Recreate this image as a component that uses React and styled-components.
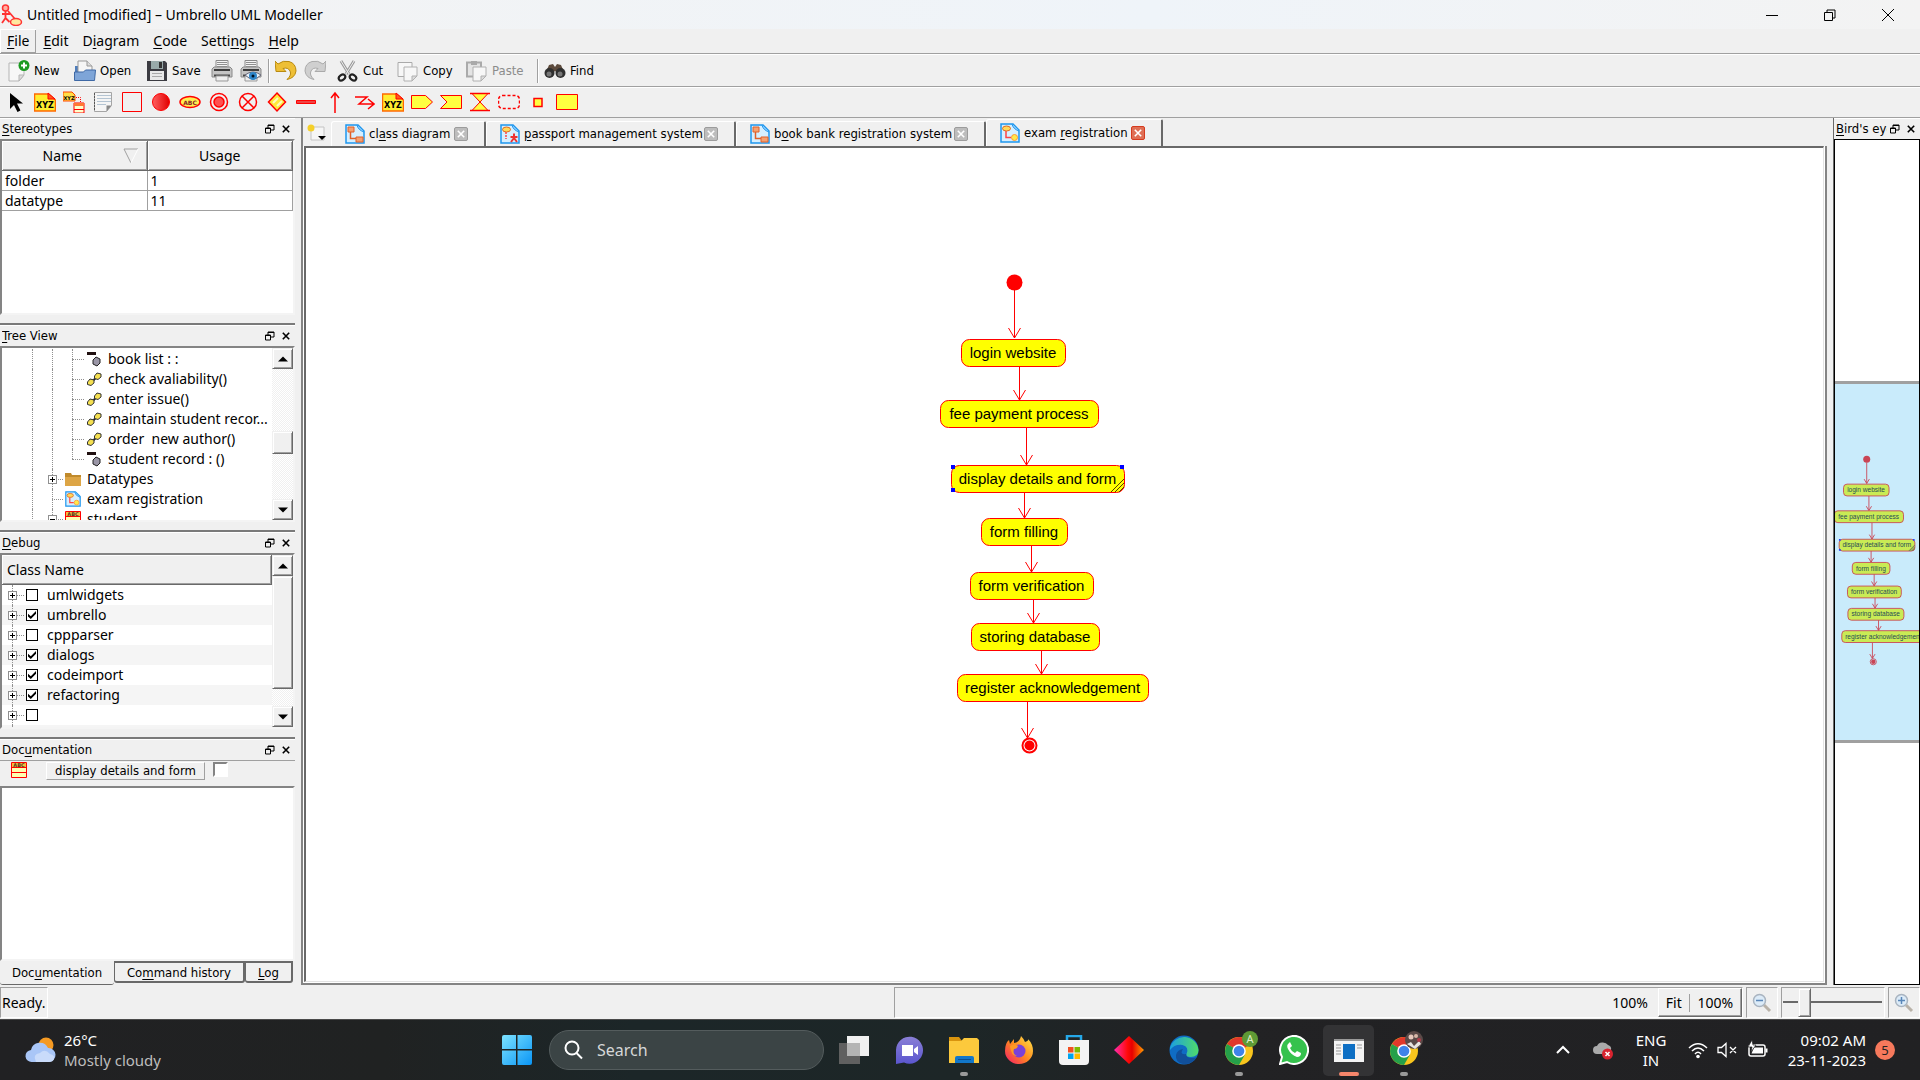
import React, { useState } from "react";
import styled, { createGlobalStyle, css } from "styled-components";

const ui = `"Noto Sans", "Open Sans", sans-serif`;
const tahoma = `"DejaVu Sans Condensed", "DejaVu Sans", sans-serif`;

const Global = createGlobalStyle`
  * { box-sizing: border-box; }
  html, body { margin: 0; overflow: hidden; }
  body { font-family: ${ui}; font-size: 14px; color: #000; background: #f0f0f0; }
  button, input, textarea { font: inherit; color: inherit; margin: 0; padding: 0; border-radius: 0; }
  button { background: none; border: 0; }
  svg { display: block; flex: none; }
  u { text-underline-offset: 2px; text-decoration-thickness: 1px; }
`;

const Shell = styled.div`
  display: flex;
  flex-direction: column;
  height: 100vh;
  background: #f0f0f0;
`;

/* ---------- title and menu ---------- */
const TitleBar = styled.header`
  display: flex;
  align-items: center;
  height: 29px;
  padding-left: 1px;
  background: linear-gradient(90deg, #f3f3f3, #eff4f9 60%, #f3f3f3);
`;
const TitleText = styled.h1`
  flex: 1;
  margin: 0 0 0 4px;
  font-size: 14px;
  font-weight: 400;
  line-height: 28px;
`;
const WinButton = styled.button`
  display: grid;
  place-items: center;
  width: 58px;
  height: 28px;
`;
const WinButtons = styled.div`
  display: flex;
  padding-right: 3px;
`;
const MenuBar = styled.nav`
  display: flex;
  height: 25px;
  border-bottom: 1px solid #a0a0a0;
`;
const MenuItem = styled.button`
  padding: 0 7px;
  line-height: 22px;
  height: 24px;
  ${(p) =>
    p.$raised &&
    css`
      box-shadow: inset 1px 1px #fff, inset -1px -1px #a0a0a0;
    `}
`;

/* ---------- toolbars ---------- */
const ToolBar = styled.div`
  display: flex;
  align-items: center;
  height: ${(p) => (p.$small ? 31 : 33)}px;
  padding: ${(p) => (p.$small ? "0 0 2px 1px" : "0 0 0 5px")};
  border-top: 1px solid #fff;
  border-bottom: 1px solid #a0a0a0;
`;
const ToolButton = styled.button`
  display: flex;
  align-items: center;
  gap: 4px;
  width: ${(p) => p.$w}px;
  height: 30px;
  padding-left: 3px;
  font-family: ${tahoma};
  font-size: 13px;
  line-height: 16px;
  color: ${(p) => (p.disabled ? "#8c8c8c" : "#000")};
  white-space: nowrap;
`;
const ToolSep = styled.span`
  width: 2px;
  height: 24px;
  margin: 0 2px;
  border-left: 1px solid #a0a0a0;
  border-right: 1px solid #fff;
`;
const ShapeButton = styled.button`
  display: grid;
  place-items: center;
  width: 29px;
  height: 28px;
`;

/* ---------- docks ---------- */
const Body = styled.main`
  display: flex;
  flex: 1;
  min-height: 0;
`;
const LeftDock = styled.aside`
  display: flex;
  flex-direction: column;
  width: 295px;
`;
const Dock = styled.section`
  display: flex;
  flex-direction: column;
  flex: ${(p) => p.$grow} 1 0;
  min-height: 0;
  padding-bottom: ${(p) => (p.$last ? 0 : 8)}px;
  border-bottom: ${(p) => (p.$last ? "0" : "2px solid #7a7a7a")};
`;
const DockTitle = styled.div`
  display: flex;
  align-items: center;
  flex: none;
  height: 21px;
  padding: 0 1px 0 2px;
  overflow: hidden;
  border-top: 1px solid #fff;
`;
const DockName = styled.h2`
  flex: 1;
  min-width: 0;
  margin: 0;
  overflow: hidden;
  white-space: nowrap;
  font-family: ${tahoma};
  font-size: 13px;
  font-weight: 400;
  line-height: 20px;
`;
const DockButton = styled.button`
  display: grid;
  place-items: center;
  width: 16px;
  height: 16px;
`;
const Sunken = styled.div`
  display: flex;
  flex: 1;
  min-height: 0;
  overflow: hidden;
  background: #fff;
  border: 2px solid;
  border-color: #848484 #f4f4f4 #f4f4f4 #848484;
`;
const DataTable = styled.table`
  align-self: flex-start;
  width: 100%;
  table-layout: fixed;
  border-collapse: separate;
  border-spacing: 0;
`;
const HeadCell = styled.th`
  height: 30px;
  padding: 0 8px;
  font-weight: 400;
  line-height: 26px;
  text-align: center;
  background: #f0f0f0;
  border-right: 1px solid #696969;
  border-bottom: 1px solid #696969;
  box-shadow: inset 1px 1px #fff, inset -1px -1px #a0a0a0;
`;
const HeadInner = styled.span`
  display: flex;
  align-items: center;
  gap: 8px;
`;
const HeadLabel = styled.span`
  flex: 1;
`;
const Cell = styled.td`
  height: 20px;
  padding: 0 3px;
  line-height: 18px;
  border-right: 1px solid #a0a0a0;
  border-bottom: 1px solid #a0a0a0;
`;

const Scroll = styled.div`
  display: flex;
  flex-direction: column;
  flex: none;
  width: 21px;
  background: repeating-conic-gradient(#f0f0f0 0% 25%, #fff 0% 50%) 0 0 / 2px 2px;
`;
const bevel = css`
  background: #f0f0f0;
  border: 1px solid;
  border-color: #f0f0f0 #696969 #696969 #f0f0f0;
  box-shadow: inset 1px 1px #fff, inset -1px -1px #a0a0a0;
`;
const ScrollArrow = styled.button`
  ${bevel}
  display: grid;
  place-items: center;
  height: 21px;
  flex: none;
`;
const ScrollSpace = styled.div`
  flex: ${(p) => p.$grow} 1 0;
`;
const ScrollThumb = styled.div`
  ${bevel}
  flex: ${(p) => p.$grow} 1 0;
`;

/* ---------- trees ---------- */
const List = styled.ul`
  flex: 1;
  min-width: 0;
  margin: 0;
  padding: ${(p) => p.$top || 0}px 0 0;
  list-style: none;
`;
const TreeRow = styled.li`
  display: flex;
  align-items: center;
  height: 20px;
  line-height: 20px;
  white-space: pre;
`;
const Guide = styled.span`
  position: relative;
  width: ${(p) => p.$w || 20}px;
  height: 20px;
  flex: none;
  &::before {
    content: "";
    position: absolute;
    left: ${(p) => p.$x}px;
    top: 0;
    height: ${(p) => (p.$end ? 10 : 20)}px;
    border-left: 1px dotted #909090;
  }
  &::after {
    content: "";
    position: absolute;
    left: ${(p) => p.$x}px;
    right: 2px;
    top: 10px;
    border-top: ${(p) => (p.$branch ? "1px dotted #909090" : "0")};
  }
`;
const Expander = styled.button`
  position: absolute;
  z-index: 1;
  left: ${(p) => p.$x - 4}px;
  top: 6px;
  display: grid;
  place-items: center;
  width: 9px;
  height: 9px;
  background: #fff;
  border: 1px solid #909090;
`;
const TreeLabel = styled.span`
  margin-left: ${(p) => p.$gap}px;
`;
const DebugRow = styled(TreeRow)`
  background: ${(p) => (p.$alt ? "#f5f5f5" : "#fff")};
`;
const DebugHead = styled.div`
  height: 31px;
  padding-left: 5px;
  line-height: 29px;
  background: #f0f0f0;
  border-right: 1px solid #696969;
  border-bottom: 1px solid #696969;
  box-shadow: inset 1px 1px #fff, inset -1px -1px #a0a0a0;
`;
const Column = styled.div`
  display: flex;
  flex-direction: column;
  flex: 1;
  min-width: 0;
  overflow: hidden;
`;
const Check = styled.input`
  appearance: none;
  display: grid;
  place-items: center;
  flex: none;
  width: 12px;
  height: 12px;
  background: #fff;
  border: 1px solid #000;
  &:checked::before {
    content: "";
    width: 8px;
    height: 8px;
    background: #000;
    clip-path: polygon(0 35%, 35% 65%, 100% 0, 100% 35%, 35% 100%, 0 70%);
  }
`;
const DebugLabel = styled.label`
  display: flex;
  align-items: center;
  gap: 9px;
`;
const DocHead = styled.div`
  display: flex;
  align-items: flex-start;
  height: 26px;
  border-top: 1px solid #a0a0a0;
  padding: 1px 0 0 11px;
`;
const DocName = styled.button`
  height: 18px;
  margin: 0 8px 0 19px;
  padding: 0 8px;
  font-family: ${tahoma};
  font-size: 13px;
  line-height: 16px;
  border: 1px solid;
  border-color: #fff #a0a0a0 #a0a0a0 #fff;
`;
const DocCheck = styled(Check)`
  width: 15px;
  height: 15px;
  border: 2px solid;
  border-color: #848484 #fff #fff #848484;
`;
const DocText = styled.textarea`
  flex: 1;
  resize: none;
  border: 0;
  outline: 0;
`;
const DockTabs = styled.div`
  display: flex;
  align-items: flex-start;
  height: 24px;
  flex: none;
`;
const DockTab = styled.button`
  height: ${(p) => (p.$active ? 24 : 22)}px;
  width: ${(p) => p.$w}px;
  font-family: ${tahoma};
  font-size: 13px;
  line-height: 20px;
  white-space: nowrap;
  border: solid #696969;
  border-width: ${(p) => (p.$active ? "0 0 1px 0" : "2px 2px 2px 1px")};
  border-radius: 0 0 3px 3px;
`;

/* ---------- centre ---------- */
const Centre = styled.section`
  display: flex;
  flex-direction: column;
  flex: 1;
  min-width: 0;
  margin: 0 6px;
  border: solid #848484;
  border-width: 0 0 2px 2px;
`;
const TabStrip = styled.div`
  display: flex;
  align-items: flex-end;
  height: 28px;
  flex: none;
`;
const NewTab = styled.button`
  width: 28px;
  height: 26px;
  display: grid;
  place-items: center;
`;
const DocTab = styled.div`
  display: flex;
  align-items: center;
  height: ${(p) => (p.$active ? 27 : 25)}px;
  width: ${(p) => p.$w}px;
  padding: 0 16px 0 13px;
  border: solid;
  border-width: 1px 2px 0 1px;
  border-color: #fff #696969 #fff #fff;
  border-radius: 3px 2px 0 0;
`;
const TabName = styled.button`
  display: flex;
  align-items: center;
  gap: 4px;
  flex: 1;
  min-width: 0;
  font-family: ${tahoma};
  font-size: 13px;
  line-height: 20px;
  white-space: nowrap;
`;
const TabClose = styled.button`
  display: grid;
  place-items: center;
  flex: none;
  width: 14px;
  height: 14px;
  border: 1px solid ${(p) => (p.$active ? "#d63a1e" : "#9c9c9c")};
  border-radius: 2px;
  background: ${(p) => (p.$active ? "#df6f55" : "#bdbdbd")};
`;
const CanvasFrame = styled.div`
  display: flex;
  flex: 1;
  min-height: 0;
  padding: 0 1px 1px;
  background: #fff;
  border-right: 2px solid #848484;
`;
const Canvas = styled.div`
  flex: 1;
  min-width: 0;
  overflow: hidden;
  background: #fff;
  border: solid;
  border-width: 2px 1px 1px 2px;
  border-color: #696969 #e3e3e3 #e3e3e3 #696969;
`;

/* ---------- bird's eye ---------- */
const RightDock = styled.aside`
  display: flex;
  flex-direction: column;
  width: 87px;
  border-left: 1px solid #696969;
`;
const Bird = styled.div`
  display: flex;
  flex-direction: column;
  flex: 1;
  min-height: 0;
  background: #fff;
  border: 1px solid #000;
`;
const BirdSpace = styled.div`
  flex: ${(p) => p.$grow} 1 0;
`;
const BirdView = styled.div`
  flex: none;
  overflow: hidden;
  border: solid #a0a0a0;
  border-width: 3px 0;
`;

/* ---------- status ---------- */
const StatusBar = styled.footer`
  display: flex;
  gap: 3px;
  height: 34px;
  padding: 2px 0 1px;
  line-height: 29px;
`;
const panel = css`
  border: 1px solid;
  border-color: #a0a0a0 #fff #fff #a0a0a0;
`;
const Ready = styled.div`
  ${panel}
  width: 48px;
  padding-left: 1px;
`;
const StatusGap = styled.div`
  flex: 841 1 0;
`;
const StatusPanel = styled.div`
  ${panel}
  flex: 848 1 0;
  display: flex;
  justify-content: flex-end;
  gap: 10px;
`;
const ZoomGroup = styled.div`
  display: flex;
  align-items: center;
  width: 84px;
  height: 29px;
  border: 1px solid;
  border-color: #fff #696969 #696969 #fff;
  box-shadow: inset -1px -1px #a0a0a0;
`;
const ZoomText = styled.button`
  flex: ${(p) => p.$grow};
  line-height: 26px;
  & + & {
    border-left: 1px solid #a0a0a0;
    line-height: 18px;
  }
`;
const ZoomIconBox = styled.button`
  ${panel}
  display: grid;
  place-items: center;
  width: 32px;
`;
const SliderBox = styled.div`
  ${panel}
  width: 104px;
  padding: 0 2px 0 1px;
`;
const Slider = styled.input`
  appearance: none;
  display: block;
  width: 100%;
  height: 29px;
  background: none;
  &::-webkit-slider-runnable-track {
    height: 29px;
    background: linear-gradient(#696969, #696969) 0 13px / 100% 2px no-repeat;
  }
  &::-webkit-slider-thumb {
    appearance: none;
    width: 13px;
    height: 29px;
    ${bevel}
  }
`;

/* ---------- taskbar ---------- */
const TaskBar = styled.footer`
  display: grid;
  grid-template-columns: 1fr auto 1fr;
  align-items: center;
  flex: none;
  height: 61px;
  color: #fff;
  font-size: 15px;
  border-top: 1px solid #4a4a4a;
  background: linear-gradient(90deg, #212123, #202222 20%, #1c2628 33%, #1d2627 50%, #222224 62%, #212123);
`;
const Weather = styled.button`
  display: flex;
  align-items: center;
  gap: 8px;
  padding-left: 24px;
  text-align: left;
  line-height: 20px;
`;
const Muted = styled.span`
  display: block;
  color: #bdbdbd;
`;
const Apps = styled.div`
  display: flex;
  align-items: center;
`;
const AppButton = styled.button`
  position: relative;
  display: grid;
  place-items: center;
  width: 51px;
  height: 51px;
  margin: 0 2px;
  border-radius: 5px;
  background: ${(p) => (p.$active ? "#333335" : "none")};
  &::after {
    content: "";
    position: absolute;
    bottom: 0;
    left: 50%;
    transform: translateX(-50%);
    width: ${(p) => (p.$active ? 20 : p.$open ? 8 : 0)}px;
    height: 4px;
    border-radius: 2px;
    background: ${(p) => (p.$active ? "#f6866b" : "#9a9a9a")};
  }
`;
const Search = styled.label`
  display: flex;
  align-items: center;
  gap: 13px;
  width: 275px;
  height: 40px;
  margin: 0 2px 0 5px;
  padding-left: 14px;
  background: #3b4445;
  border: 1px solid #545c5d;
  border-radius: 20px;
`;
const SearchInput = styled.input`
  width: 200px;
  border: 0;
  outline: 0;
  background: none;
  font-size: 16px;
  &::placeholder {
    color: #d6d8d8;
    opacity: 1;
  }
`;
const Tray = styled.div`
  display: flex;
  align-items: center;
  justify-content: flex-end;
  padding-right: 25px;
  line-height: 20px;
`;
const TrayItem = styled.button`
  display: grid;
  place-items: center;
  width: ${(p) => p.$w}px;
  height: 40px;
  line-height: 20px;
`;
const Clock = styled.time`
  width: 87px;
  text-align: right;
  white-space: nowrap;
`;
const Badge = styled.span`
  width: 20px;
  height: 20px;
  margin-left: 9px;
  border-radius: 50%;
  background: #f6795c;
  color: #222;
  font-size: 13px;
  text-align: center;
`;

/* ---------- icon drawings ---------- */
const Ic = ({ s = 22, v = 22, children }) => (
  <svg width={s} height={s} viewBox={`0 0 ${v} ${v}`} fill="none" aria-hidden="true">
    {children}
  </svg>
);
const red = "#f00";
const yel = "#ffff40";

const Logo = () => (
  <Ic>
    <circle cx="4.500" cy="4" r="3" fill="#ffb0a0" stroke="#f33" strokeWidth="1.500" />
    <path d="M4.500 7v7M1 10h8M4.500 14L1 19M4.500 14l4 4M7 7l7 8" stroke="#f33" strokeWidth="1.800" />
    <ellipse cx="15" cy="18" rx="5.500" ry="3.500" fill="#ffe9a0" stroke="#f33" strokeWidth="1.500" />
  </Ic>
);
const page = "M3.500 2.500h15v12l-5 5h-10z";
const NewI = () => (
  <Ic>
    <path d="M1 3h15v12l-5 6H1z" fill="#f7f7f7" stroke="#b5b5b5" />
    <path d="M16 15h-5v6z" fill="#ddd" stroke="#b5b5b5" />
    <circle cx="16" cy="5.500" r="5.500" fill="#1a9a20" />
    <path d="M16 2.500v6M13 5.500h6" stroke="#fff" strokeWidth="2" />
  </Ic>
);
const OpenI = () => (
  <Ic>
    <path d="M1 6h6v10H1z" fill="#4f7dbb" />
    <path d="M4 1h9l5 5v9H4z" fill="#f6f6f6" stroke="#999" />
    <path d="M13 1v5h5" stroke="#999" fill="#ddd" />
    <path d="M.5 20.500V12h9l2-2h10l-1 10.500z" fill="#7ea5d8" stroke="#3f69a5" />
  </Ic>
);
const SaveI = () => (
  <Ic>
    <path d="M1 1h18l2 2v18H1z" fill="#3c3c42" />
    <path d="M5 1h12v8H5z" fill="#9aa" />
    <path d="M13 2h3v6h-3z" fill="#333" />
    <path d="M4 11h14v9H4z" fill="#e9e9e9" />
    <path d="M6 13.500h10M6 16.500h10" stroke="#aaa" />
  </Ic>
);
const PrintI = ({ eye }) => (
  <Ic>
    <path d="M5 .5h12v9H5z" fill="#f4f4f4" stroke="#8a8a8a" />
    <path d="M6 2.500h10M6 4.500h10M6 6.500h10" stroke="#8f8f8f" />
    <path d="M1 9l2-2h16l2 2v8H1z" fill="#c4c4c4" stroke="#8a8a8a" />
    <path d="M3 9h16v2H3z" fill="#3c3c3c" />
    <path d="M3 14.500h16v2H3z" fill="#4a4a4a" />
    <path d="M5 16h12v5H5z" fill="#eee" stroke="#999" />
    {eye && (
      <>
        <path d="M5 15q8-6 16 0q-8 8-16 0z" fill="#eaf3fb" stroke="#667" />
        <circle cx="13" cy="16" r="4" fill="#2e86c9" />
        <circle cx="13" cy="16" r="1.500" fill="#012" />
      </>
    )}
  </Ic>
);
const UndoI = ({ off }) => (
  <Ic>
    <g transform={off ? "translate(22 0) scale(-1 1)" : undefined}>
      <path d="M0 1l3 3Q8 0 14 1.500Q21 3.500 21 11Q20 18 12 19.500Q17 15 15 11Q13 7 8 8.500L11 11.500H1z" fill={off ? "#cfcfcf" : "#eebf35"} stroke={off ? "#aaa" : "#b98a10"} />
    </g>
  </Ic>
);
const CutI = () => (
  <Ic>
    <path d="M4 1l8 13M17 1L9 14" stroke="#999" strokeWidth="3" />
    <path d="M4 1l8 13M17 1L9 14" stroke="#eee" strokeWidth="1" />
    <ellipse cx="5" cy="17.500" rx="3.500" ry="2.500" stroke="#222" strokeWidth="2.200" transform="rotate(-35 5 17.500)" />
    <ellipse cx="16" cy="17.500" rx="3.500" ry="2.500" stroke="#222" strokeWidth="2.200" transform="rotate(35 16 17.500)" />
  </Ic>
);
const CopyI = ({ clip }) => (
  <Ic>
    <path d="M1 2.500h14v14H1z" fill={clip ? "#e4e4e4" : "#f7f7f7"} stroke="#aaa" strokeWidth={clip ? 2 : 1} />
    {clip && <path d="M5 1h6v4H5z" fill="#aaa" />}
    <path d="M7 7h13v9l-5 5H7z" fill="#f7f7f7" stroke="#b0b0b0" />
    <path d="M20 16h-5v5z" fill="#ddd" stroke="#b0b0b0" />
  </Ic>
);
const FindI = () => (
  <Ic>
    <path d="M5 5l4-1 2 3 2-3 4 1 3 7-5 2-4-3-4 3-5-2z" fill="#5c4a3c" />
    <circle cx="5.500" cy="13" r="5" fill="#2f2f2f" />
    <circle cx="16.500" cy="13" r="5" fill="#2f2f2f" />
    <circle cx="5" cy="14" r="2.500" fill="#777" />
    <circle cx="16" cy="14" r="2.500" fill="#777" />
  </Ic>
);
const Xyz = () => (
  <Ic>
    <path d="M.5 3h14l7 6v11H.5z" fill="#ffee30" stroke="#ff6a00" strokeWidth="1.500" />
    <path d="M14 2v6h7z" fill="#ff5a1a" stroke={red} />
    <text x="11" y="17" fontSize="8" fontWeight="700" fontFamily="DejaVu Sans" textAnchor="middle" fill="#000">XYZ</text>
  </Ic>
);
const shapes = [
  ["Select", <Ic><path d="M5 2v16l4-4 3.500 7 3-1.500-3.500-7h6z" fill="#000" /></Ic>],
  ["Object", <Xyz />],
  ["Object flow", <Ic>
    <path d="M0 1h9l3 3v6H0z" fill="#fd4" stroke="#f40" />
    <text x="6" y="8.500" fontSize="5" fontWeight="700" fontFamily="DejaVu Sans" textAnchor="middle" fill="#000">XYZ</text>
    <path d="M13 6.500h4.500v5" stroke={red} strokeDasharray="1 1" />
    <path d="M11 12h10v10H11z" fill="#ffc" stroke={red} /><path d="M11 12h10v3H11z" fill="#f73" /><path d="M11 18.500h10" stroke={red} />
  </Ic>],
  ["Note", <Ic><path d="M2.500 1.500h17v13l-5 6h-12z" fill="#f5f5f5" stroke="#a5a5a5" /><path d="M5 4.500h14M5 7.500h14M5 10.500h14M5 13.500h9" stroke="#b4c4d2" /><path d="M19.500 14.500h-5v6z" fill="#888" /><path d="M2.500 2v18" stroke="#555" strokeDasharray="2 1" /></Ic>],
  ["Box", <Ic><path d="M1.500 1.500h19v19h-19z" stroke={red} /></Ic>],
  ["Initial activity", <Ic><defs><linearGradient id="rg"><stop offset="0" stopColor="#ff6060" /><stop offset="1" stopColor="#e00000" /></linearGradient></defs><circle cx="11" cy="11" r="8.500" fill="url(#rg)" stroke={red} /></Ic>],
  ["Activity", <Ic><ellipse cx="11" cy="11" rx="10" ry="5.500" fill="#ffef50" stroke={red} strokeWidth="1.500" /><text x="11" y="13.500" fontSize="6" fontWeight="700" fontFamily="DejaVu Sans" textAnchor="middle" fill="#822">ABC</text></Ic>],
  ["End activity", <Ic><circle cx="11" cy="11" r="8.500" stroke={red} strokeWidth="1.500" /><circle cx="11" cy="11" r="5" fill="#ff5050" stroke={red} strokeWidth="1.500" /></Ic>],
  ["Final flow", <Ic><circle cx="11" cy="11" r="8.500" stroke={red} strokeWidth="1.500" /><path d="M5 5l12 12M17 5L5 17" stroke={red} strokeWidth="1.500" /></Ic>],
  ["Branch", <Ic><path d="M11 2l8.500 9L11 20 2.500 11z" fill="#ffe83a" stroke={red} strokeWidth="1.500" /><path d="M7 12l5-5M11 15l5-5" stroke="#fffbc0" strokeWidth="2" /></Ic>],
  ["Fork", <Ic><path d="M1.500 9.500h19v3h-19z" fill="#e44" stroke={red} /></Ic>],
  ["Transition", <Ic><path d="M11 22V2M7 7l4-5 4 5" stroke={red} strokeWidth="1.500" /></Ic>],
  ["Exception", <Ic><path d="M2 6h12L6 13h14M15 8l6 5-6 5" stroke={red} strokeWidth="1.500" /></Ic>],
  ["Object node", <Xyz />],
  ["Send signal", <Ic><path d="M.5 4.500h14l7 6.500-7 6.500h-14z" fill={yel} stroke={red} /></Ic>],
  ["Accept signal", <Ic><path d="M.5 4.500h21v13H.5L7 11z" fill={yel} stroke={red} /></Ic>],
  ["Time event", <Ic><path d="M3 2.500h16L3 19.500h16z" fill={yel} stroke={red} /><path d="M1 2.500h20M1 19.500h20" stroke={red} strokeWidth="1.500" /></Ic>],
  ["Region", <Ic><rect x="0.500" y="4.500" width="21" height="13" rx="4" stroke={red} strokeDasharray="3 2" strokeWidth="1.500" /></Ic>],
  ["Pin", <Ic><path d="M7 7.500h8v8H7z" fill={yel} stroke={red} strokeWidth="1.500" /></Ic>],
  ["Pre/Post condition", <Ic><path d="M.5 3.500h21v15H.5z" fill={yel} stroke={red} /></Ic>],
];

const DiagramIcon = ({ kind = "class", s = 20 }) => (
  <Ic s={s} v={20}>
    <path d="M1 1h12l6 6v12H1z" fill="#d6efff" stroke="#1e96ee" strokeWidth="1.500" />
    <path d="M12 1q1 5 7 7" stroke="#1e96ee" fill="#8fd0ff" />
    {kind === "class" ? (
      <>
        <path d="M3 3h6v5H3zM11 13h7v5h-7z" fill="#f5a070" stroke="#e0602a" />
        <path d="M5.500 8v6.500H11" stroke="#e0602a" strokeWidth="1.500" />
      </>
    ) : (
      <>
        <ellipse cx="6.500" cy="5.500" rx="4" ry="2.500" fill="#ffd95a" stroke="#e06a20" />
        <path d={kind === "use" ? "M6 8v7" : "M6 8v6.500h5"} stroke="#f44" strokeWidth="1.500" strokeDasharray={kind === "use" ? "2 1" : undefined} />
        {kind === "use" ? (
          <path d="M14 9.500v5M10.500 13h7M14 14l-3 4M14 14l3 4" stroke="#e33" strokeWidth="2" />
        ) : (
          <circle cx="14.500" cy="14.500" r="3" fill="#ffe94a" stroke="#f93" />
        )}
      </>
    )}
  </Ic>
);
const ClassBox = () => (
  <Ic s={16} v={16}>
    <path d="M.5 .5h15v15H.5z" fill="#ffffb0" stroke={red} />
    <path d="M1 1h14v4H1z" fill="#f5c040" />
    <text x="8" y="5" fontSize="5" fontWeight="700" fontFamily="DejaVu Sans" textAnchor="middle" fill="#532">ABC</text>
    <path d="M.5 5.500h15M.5 10.500h15" stroke={red} />
  </Ic>
);
const Attr = () => (
  <Ic s={16} v={16}>
    <path d="M1 1h9v3H1z" fill="#201010" />
    <path d="M7 9l3-3 4 2v4l-3 3-4-2z" fill="#9a96a6" stroke="#222" />
  </Ic>
);
const Oper = () => (
  <Ic s={16} v={16}>
    <path d="M5.500 11L12 5" stroke="#222" strokeWidth="2" />
    <path d="M1.500 11l2.500-3 4 1v3l-3 2.500-3.500-1zM8.500 5L11 2l4 1v3l-3 2.500-3.500-1z" fill="#f5e050" stroke="#333" />
  </Ic>
);
const Folder = () => (
  <Ic s={16} v={16}>
    <path d="M0 2h6l1 2h9v11H0z" fill="#c08a2c" />
    <path d="M0 6h16v9H0z" fill="#dda545" />
  </Ic>
);
const Tri = ({ up }) => (
  <Ic s={10} v={10}>
    <path d={up ? "M0 7.500h10L5 2.500z" : "M0 2.500h10L5 7.500z"} fill="#000" />
  </Ic>
);
const FloatI = () => (
  <Ic s={10} v={10}>
    <path d="M3 4V1h6v5H6M3 1.500h6" stroke="#000" />
    <path d="M.5 4h5v5h-5zM.5 4.500h5" stroke="#000" />
  </Ic>
);
const CloseI = ({ c = "#000", s = 10 }) => (
  <Ic s={s} v={10}>
    <path d="M1 1l8 8M9 1L1 9" stroke={c} strokeWidth="2" />
  </Ic>
);
const Magnifier = ({ plus }) => (
  <Ic s={20} v={20}>
    <path d="M12 12l6 6" stroke="#b9b2a8" strokeWidth="3" />
    <circle cx="7.500" cy="7.500" r="6" fill="#dcebf8" stroke="#a9b4c0" strokeWidth="1.500" />
    <path d={plus ? "M4 7.500h7M7.500 4v7" : "M4 7.500h7"} stroke="#5a86b8" strokeWidth="1.500" />
  </Ic>
);
const Chrome = () => (
  <>
    <circle cx="15" cy="15" r="14" fill="#f9c51d" />
    <path d="M15 15L2.900 8A14 14 0 0 1 27.100 8z" fill="#e0382b" />
    <path d="M15 15L2.900 8A14 14 0 0 0 15 29l6-10.500z" fill="#25a04a" />
    <path d="M15 8.500h12.500L27 8H15z" fill="#e0382b" />
    <circle cx="15" cy="15" r="6.800" fill="#fff" />
    <circle cx="15" cy="15" r="5.300" fill="#3f83ea" />
  </>
);

/* ---------- activity diagram ---------- */
const nodes = [
  [961, 339, 104, "login website"],
  [940, 400, 158, "fee payment process"],
  [951, 465, 173, "display details and form"],
  [981, 518, 86, "form filling"],
  [970, 572, 123, "form verification"],
  [971, 623, 128, "storing database"],
  [957, 674, 191, "register acknowledgement"],
];
const edges = [
  [1014, 290, 338], [1019, 366, 400], [1026, 427, 465], [1024, 492, 518],
  [1031, 545, 572], [1033, 599, 623], [1041, 650, 674], [1027, 701, 738],
];
const Diagram = ({ line = 1 }) => (
  <g fontFamily="Liberation Sans, Arial, sans-serif" fontSize="15" strokeWidth={line}>
    {edges.map(([x, a, b]) => (
      <path key={a} d={`M${x + 0.5} ${a}V${b}M${x - 5.5} ${b - 10}l6 10 6-10`} stroke={red} fill="none" />
    ))}
    <circle cx="1014.500" cy="282.500" r="8" fill={red} />
    {nodes.map(([x, y, w, t]) => (
      <g key={t}>
        <rect x={x + 0.5} y={y + 0.5} width={w} height="27" rx="8" fill="#ff0" stroke={red} />
        <text x={x + w / 2} y={y + 19} textAnchor="middle" fill="#000">{t}</text>
      </g>
    ))}
    <path d="M951 465h4v4h-4zM1120 465h4v4h-4zM951 488h4v4h-4z" fill="#00f" />
    <path d="M1111 492l13-13M1115 492l9-9M1119 492l5-5" stroke="#553c00" />
    <circle cx="1029.500" cy="745.500" r="7" fill="#fff" stroke={red} strokeWidth="2" />
    <circle cx="1029.500" cy="745.500" r="5" fill={red} />
  </g>
);

/* ---------- composed parts ---------- */
const Title = ({ children }) => (
  <DockTitle>
    <DockName>{children}</DockName>
    <DockButton aria-label="Float"><FloatI /></DockButton>
    <DockButton aria-label="Close"><CloseI s={8} /></DockButton>
  </DockTitle>
);
const ScrollBar = ({ before, thumb, after }) => (
  <Scroll>
    <ScrollArrow aria-label="Scroll up"><Tri up /></ScrollArrow>
    <ScrollSpace $grow={before} />
    <ScrollThumb $grow={thumb} />
    <ScrollSpace $grow={after} />
    <ScrollArrow aria-label="Scroll down"><Tri /></ScrollArrow>
  </Scroll>
);
const ExpandBox = ({ x, open }) => (
  <Expander $x={x} aria-label={open ? "Collapse" : "Expand"}>
    <Ic s={7} v={7}><path d={open ? "M1 3.500h5" : "M1 3.500h5M3.500 1v5"} stroke="#000" /></Ic>
  </Expander>
);
const members = [
  [<Attr />, "book list : :"],
  [<Oper />, "check avaliability()"],
  [<Oper />, "enter issue()"],
  [<Oper />, "maintain student recor..."],
  [<Oper />, "order  new author()"],
  [<Attr />, "student record : ()"],
];
const groups = [
  [<Folder />, "Datatypes", "closed"],
  [<DiagramIcon kind="act" s={16} />, "exam registration"],
  [<ClassBox />, "student", "open"],
];
const debugItems = [
  ["umlwidgets", false], ["umbrello", true], ["cppparser", false], ["dialogs", true],
  ["codeimport", true], ["refactoring", true], ["", false], [" ", false],
];
const tools = [
  [<NewI />, "New", 66], [<OpenI />, "Open", 72], [<SaveI />, "Save", 65],
  [<PrintI />, null, 29], [<PrintI eye />, null, 29], "sep",
  [<UndoI />, null, 29], [<UndoI off />, null, 33],
  [<CutI />, "Cut", 60], [<CopyI />, "Copy", 69], [<CopyI clip />, "Paste", 72, true], "sep",
  [<FindI />, "Find", 60],
];

export default function App() {
  const [checks, setChecks] = useState(debugItems.map((d) => d[1]));
  return (
    <Shell>
      <Global />
      <TitleBar>
        <Logo />
        <TitleText>Untitled [modified] – Umbrello UML Modeller</TitleText>
        <WinButtons>
          <WinButton aria-label="Minimize"><Ic s={12} v={12}><path d="M0 6.500h12" stroke="#000" /></Ic></WinButton>
          <WinButton aria-label="Restore"><Ic s={12} v={12}><path d="M.5 3.500h8v8h-8zM3 3V1h8v8H9" stroke="#000" /></Ic></WinButton>
          <WinButton aria-label="Close window"><Ic s={12} v={12}><path d="M0 0l12 12M12 0L0 12" stroke="#000" /></Ic></WinButton>
        </WinButtons>
      </TitleBar>
      <MenuBar>
        <MenuItem $raised><u>F</u>ile</MenuItem>
        <MenuItem><u>E</u>dit</MenuItem>
        <MenuItem>D<u>i</u>agram</MenuItem>
        <MenuItem><u>C</u>ode</MenuItem>
        <MenuItem>Setti<u>n</u>gs</MenuItem>
        <MenuItem><u>H</u>elp</MenuItem>
      </MenuBar>
      <ToolBar>
        {tools.map((t, i) =>
          t === "sep" ? <ToolSep key={i} /> : (
            <ToolButton key={i} $w={t[2]} disabled={!!t[3]}>{t[0]}{t[1]}</ToolButton>
          )
        )}
      </ToolBar>
      <ToolBar $small>
        {shapes.map(([name, icon]) => (
          <ShapeButton key={name} aria-label={name}>{icon}</ShapeButton>
        ))}
      </ToolBar>

      <Body>
        <LeftDock>
          <Dock $grow={197}>
            <Title><u>S</u>tereotypes</Title>
            <Sunken>
              <DataTable>
                <thead>
                  <tr>
                    <HeadCell>
                      <HeadInner>
                        <HeadLabel>Name</HeadLabel>
                        <Ic s={16} v={16}><path d="M8 15L1 1h14" stroke="#a0a0a0" /><path d="M15 1L8 15" stroke="#fff" /></Ic>
                      </HeadInner>
                    </HeadCell>
                    <HeadCell>Usage</HeadCell>
                  </tr>
                </thead>
                <tbody>
                  <tr><Cell>folder</Cell><Cell>1</Cell></tr>
                  <tr><Cell>datatype</Cell><Cell>11</Cell></tr>
                </tbody>
              </DataTable>
            </Sunken>
          </Dock>

          <Dock $grow={197}>
            <Title><u>T</u>ree View</Title>
            <Sunken>
              <List $top={1}>
                {members.map(([icon, text], i) => (
                  <TreeRow key={text}>
                    <Guide $w={40} $x={30} />
                    <Guide $x={10} />
                    <Guide $w={24} $x={10} $branch $end={i === 5} />
                    {icon}
                    <TreeLabel $gap={6}>{text}</TreeLabel>
                  </TreeRow>
                ))}
                {groups.map(([icon, text, state]) => (
                  <TreeRow key={text}>
                    <Guide $w={40} $x={30} />
                    <Guide $w={23} $x={10} $branch>
                      {state && <ExpandBox x={10} open={state === "open"} />}
                    </Guide>
                    {icon}
                    <TreeLabel $gap={6}>{text}</TreeLabel>
                  </TreeRow>
                ))}
              </List>
              <ScrollBar before={64} thumb={22} after={46} />
            </Sunken>
          </Dock>

          <Dock $grow={197}>
            <Title><u>D</u>ebug</Title>
            <Sunken>
              <Column>
                <DebugHead>Class Name</DebugHead>
                <List>
                  {debugItems.map(([text], i) => (
                    <DebugRow key={text} $alt={i % 2 === 1}>
                      <Guide $w={24} $x={10} $branch><ExpandBox x={10} /></Guide>
                      <DebugLabel>
                        <Check
                          type="checkbox"
                          checked={checks[i]}
                          aria-label={text.trim() || "unnamed"}
                          onChange={() => setChecks(checks.map((c, j) => (j === i ? !c : c)))}
                        />
                        {text}
                      </DebugLabel>
                    </DebugRow>
                  ))}
                </List>
              </Column>
              <ScrollBar before={0} thumb={115} after={18} />
            </Sunken>
          </Dock>

          <Dock $grow={222} $last>
            <Title>Doc<u>u</u>mentation</Title>
            <DocHead>
              <ClassBox />
              <DocName>display details and form</DocName>
              <DocCheck type="checkbox" aria-label="Modified" />
            </DocHead>
            <Sunken><DocText aria-label="Documentation text" /></Sunken>
          </Dock>
          <DockTabs>
            <DockTab $w={114} $active>Doc<u>u</u>mentation</DockTab>
            <DockTab $w={131}>Co<u>m</u>mand history</DockTab>
            <DockTab $w={48}><u>L</u>og</DockTab>
          </DockTabs>
        </LeftDock>

        <Centre>
          <TabStrip>
            <NewTab aria-label="New diagram">
              <Ic s={20} v={20}>
                <path d="M4 4h13v13H4z" fill="#f6f6f6" stroke="#c4c4c4" />
                <circle cx="4" cy="5" r="3.500" fill="#f5d02a" />
                <path d="M11 13h8l-4 4z" fill="#000" />
              </Ic>
            </NewTab>
            <DocTab $w={155}>
              <TabName><DiagramIcon /><span>cl<u>a</u>ss diagram</span></TabName>
              <TabClose aria-label="Close tab"><CloseI c="#fff" s={8} /></TabClose>
            </DocTab>
            <DocTab $w={250}>
              <TabName><DiagramIcon kind="use" /><span><u>p</u>assport management system</span></TabName>
              <TabClose aria-label="Close tab"><CloseI c="#fff" s={8} /></TabClose>
            </DocTab>
            <DocTab $w={250}>
              <TabName><DiagramIcon /><span>b<u>o</u>ok bank registration system</span></TabName>
              <TabClose aria-label="Close tab"><CloseI c="#fff" s={8} /></TabClose>
            </DocTab>
            <DocTab $w={177} $active>
              <TabName><DiagramIcon kind="act" /><span>exam <u>r</u>egistration</span></TabName>
              <TabClose $active aria-label="Close tab"><CloseI c="#fff" s={8} /></TabClose>
            </DocTab>
          </TabStrip>
          <CanvasFrame>
            <Canvas>
              <svg width="100%" height="100%" role="img" aria-label="exam registration activity diagram">
                <g transform="translate(-306 -148)"><Diagram /></g>
              </svg>
            </Canvas>
          </CanvasFrame>
        </Centre>

        <RightDock>
          <Title><u>B</u>ird's eye</Title>
          <Bird>
            <BirdSpace $grow={240} />
            <BirdView>
              <svg width="100%" height="356" viewBox="942 110 192 815" preserveAspectRatio="xMinYMid slice" aria-hidden="true">
                <Diagram line={2} />
                <rect x="900" y="0" width="400" height="1200" fill="#65c6f3" fillOpacity="0.350" />
              </svg>
            </BirdView>
            <BirdSpace $grow={240} />
          </Bird>
        </RightDock>
      </Body>

      <StatusBar>
        <Ready>Ready.</Ready>
        <StatusGap />
        <StatusPanel>
          <span>100%</span>
          <ZoomGroup>
            <ZoomText $grow={30}>Fit</ZoomText>
            <ZoomText $grow={52}>100%</ZoomText>
          </ZoomGroup>
        </StatusPanel>
        <ZoomIconBox aria-label="Zoom out"><Magnifier /></ZoomIconBox>
        <SliderBox><Slider type="range" aria-label="Zoom" min="0" max="100" defaultValue="17" /></SliderBox>
        <ZoomIconBox aria-label="Zoom in"><Magnifier plus /></ZoomIconBox>
      </StatusBar>

      <TaskBar>
        <Weather>
          <Ic s={32} v={32}>
            <circle cx="22" cy="11" r="7.500" fill="#f59a23" />
            <path d="M8 28a6 6 0 0 1-1-12a9 9 0 0 1 17-2a7 7 0 0 1 1 14z" fill="#a9c6f7" />
            <path d="M12 28q-4-8 4-9q5-5 10 1q5 1 4 5q-1 3-5 3z" fill="#c9dbfa" />
          </Ic>
          <span>26°C<Muted>Mostly cloudy</Muted></span>
        </Weather>
        <Apps>
          <AppButton aria-label="Start">
            <Ic s={30} v={30}>
              <defs><linearGradient id="wg" x2="1" y2="1"><stop stopColor="#7de3ff" /><stop offset="1" stopColor="#0a95f5" /></linearGradient></defs>
              <path d="M0 2q0-2 2-2h12v14H0zM15.500 0H28q2 0 2 2v12H15.500zM0 15.500h14V30H2q-2 0-2-2zM15.500 15.500H30V28q0 2-2 2H15.500z" fill="url(#wg)" />
            </Ic>
          </AppButton>
          <Search>
            <Ic s={20} v={20}><circle cx="8" cy="8" r="6.500" stroke="#fff" strokeWidth="2" /><path d="M12.500 13l5.500 5.500" stroke="#fff" strokeWidth="2" /></Ic>
            <SearchInput placeholder="Search" aria-label="Search" />
          </Search>
          <AppButton aria-label="Task view">
            <Ic s={30} v={30}><path d="M0 8h21v21H0z" fill="#606060" /><path d="M8 1h22v20H8z" fill="#f0f0f0" /><path d="M8 8h13v13H8z" fill="#b4b4b4" /></Ic>
          </AppButton>
          <AppButton aria-label="Chat">
            <Ic s={30} v={30}>
              <defs><linearGradient id="cg" y2="1" x2="0"><stop stopColor="#8a7fd6" /><stop offset="1" stopColor="#5b56cf" /></linearGradient></defs>
              <path d="M2 29V15a13.500 13.500 0 1 1 8 12.500z" fill="url(#cg)" /><path d="M8 10h11v11H8zM20 14l4-3v9l-4-3z" fill="#fff" />
            </Ic>
          </AppButton>
          <AppButton $open aria-label="File Explorer">
            <Ic s={30} v={30}><path d="M0 2h10l3 4H0z" fill="#d9940e" /><path d="M0 6h12l3-3h13l2 2v23H0z" fill="#fcc93c" /><path d="M6 28v-5q0-2 2-2h15q2 0 2 2v5z" fill="#1277c9" /><path d="M9 24.500h13" stroke="#0b4f90" /></Ic>
          </AppButton>
          <AppButton aria-label="Firefox">
            <Ic s={30} v={30}>
              <defs><linearGradient id="ff" x1="1" x2="0" y2="1"><stop stopColor="#ffe94a" /><stop offset=".5" stopColor="#ff8a1f" /><stop offset="1" stopColor="#f5156c" /></linearGradient></defs>
              <path d="M17 1q3 3 4 6q4-1 3-3q5 5 5 12a14 13 0 0 1-28 0Q1 8 5 5l1 4 4-5v4q6-1 7-7z" fill="url(#ff)" /><circle cx="15" cy="16" r="6.500" fill="#7a41d8" /><path d="M6 11q5-3 8 0q-1 3-4 3q-2 5 3 7q-6 0-7-10z" fill="#ff9a22" />
            </Ic>
          </AppButton>
          <AppButton aria-label="Microsoft Store">
            <Ic s={30} v={30}><path d="M8 6V1h14v5" stroke="#25a8e8" strokeWidth="2.500" /><path d="M0 5h30v21q0 4-4 4H4q-4 0-4-4z" fill="#f3f3f3" /><path d="M9 12h5.500v5.500H9z" fill="#f25022" /><path d="M15.500 12H21v5.500h-5.500z" fill="#7fba00" /><path d="M9 18.500h5.500V24H9z" fill="#00a4ef" /><path d="M15.500 18.500H21V24h-5.500z" fill="#ffb900" /></Ic>
          </AppButton>
          <AppButton aria-label="Diamond">
            <Ic s={30} v={30}>
              <defs><linearGradient id="dg"><stop stopColor="#ff2db0" /><stop offset=".45" stopColor="#ff0a0a" /><stop offset=".6" stopColor="#e80000" /><stop offset="1" stopColor="#ff9a00" /></linearGradient></defs>
              <path d="M15 1l15 14-15 14L0 15z" fill="url(#dg)" />
            </Ic>
          </AppButton>
          <AppButton aria-label="Edge">
            <Ic s={30} v={30}>
              <defs><linearGradient id="eg" x2="1"><stop stopColor="#1c9fe0" /><stop offset="1" stopColor="#4fdc6a" /></linearGradient></defs>
              <circle cx="15" cy="15" r="14.500" fill="#0f6cc4" />
              <path d="M1 13A14.500 14.500 0 0 1 29.500 15q0 7-8 7-5 0-4-3 3-7-4-9-8-1-12.500 5z" fill="url(#eg)" />
              <path d="M17 19q0 4 6 4 3 0 5-1-5 8-14 7-8-2-7-9 1-5 7-6-4 6 3 5z" fill="#114f9a" />
            </Ic>
          </AppButton>
          <AppButton $open aria-label="Chrome profile A">
            <Ic s={38} v={38}><g transform="translate(4 5)"><Chrome /></g><circle cx="30" cy="8" r="8" fill="#5f9a35" /><text x="30" y="12" fontSize="11" fontFamily="Noto Sans" fill="#dff0cc" textAnchor="middle">A</text></Ic>
          </AppButton>
          <AppButton aria-label="WhatsApp">
            <Ic s={30} v={30}><path d="M1 29l2-7a14 14 0 1 1 5 5z" fill="#35c24d" stroke="#fff" strokeWidth="2" /><path d="M10 8q-3 2-1 6 3 6 9 8 4 0 4-4l-4-2-2 2q-4-2-5-5l2-2-2-4z" fill="#fff" /></Ic>
          </AppButton>
          <AppButton $active aria-label="Umbrello">
            <Ic s={30} v={30}><path d="M0 4h30v23H0z" fill="#f4f4f4" /><path d="M0 4h30v2H0z" fill="#9a9a9a" /><path d="M9 9h12v15H9z" fill="#0e6fc4" /><path d="M2 10h5M2 13h5M2 16h5M2 19h5M23 10h5M23 13h5" stroke="#999" /></Ic>
          </AppButton>
          <AppButton $open aria-label="Chrome">
            <Ic s={38} v={38}><g transform="translate(4 5)"><Chrome /></g><circle cx="29" cy="9" r="9" fill="#5a4a48" /><circle cx="26" cy="6" r="2.500" fill="#e6c8bc" /><circle cx="31" cy="5" r="2" fill="#d8b8a8" /><path d="M22 13l4-2 3 4 5-5 2 3-6 5z" fill="#e8e4e0" /><circle cx="34" cy="9" r="2" fill="#b33a48" /></Ic>
          </AppButton>
        </Apps>
        <Tray>
          <TrayItem $w={40} aria-label="Show hidden icons"><Ic s={16} v={16}><path d="M2 11l6-6 6 6" stroke="#fff" strokeWidth="2" /></Ic></TrayItem>
          <TrayItem $w={40} aria-label="OneDrive error">
            <Ic s={20} v={20}><path d="M4 14a4 4 0 0 1 0-8 6 5 0 0 1 11-1 4 4 0 0 1 3 5l-6 4z" fill="#aaa" /><circle cx="14.500" cy="14" r="5.500" fill="#d8232f" /><path d="M12.500 12l4 4M16.500 12l-4 4" stroke="#fff" strokeWidth="1.500" /></Ic>
          </TrayItem>
          <TrayItem $w={56}>ENG<br />IN</TrayItem>
          <TrayItem $w={38} aria-label="Network">
            <Ic s={20} v={20}><path d="M1 8q9-8.500 18 0M4 11q6-6 12 0M7 14q3-3.500 6 0" stroke="#fff" strokeWidth="1.500" /><circle cx="10" cy="16.500" r="1.800" fill="#fff" /></Ic>
          </TrayItem>
          <TrayItem $w={20} aria-label="Muted">
            <Ic s={20} v={20}><path d="M1 7.500h3.500L9 3.500v13l-4.500-4H1zM13 7l6 6M19 7l-6 6" stroke="#fff" strokeWidth="1.300" /></Ic>
          </TrayItem>
          <TrayItem $w={42} aria-label="Battery">
            <Ic s={20} v={20}><rect x="1" y="5" width="16" height="11" rx="2" stroke="#fff" strokeWidth="1.500" /><path d="M6 7.500h9v6H3.500z" fill="#fff" /><path d="M18.500 8.500v4" stroke="#fff" strokeWidth="2" /><path d="M4 0L0 7h4l-1 5 5-7H5z" fill="#fff" stroke="#222" strokeWidth=".7" /></Ic>
          </TrayItem>
          <Clock>09:02 AM<br />23-11-2023</Clock>
          <Badge>5</Badge>
        </Tray>
      </TaskBar>
    </Shell>
  );
}
